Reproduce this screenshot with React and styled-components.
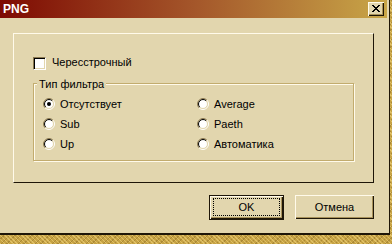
import React from "react";
import styled, { createGlobalStyle } from "styled-components";

const FACE = "#E2D6AE";
const LIGHT = "#FFFAEA";
const DARK = "#1E1608";
const SHADE = "#A8925A";

const GlobalStyle = createGlobalStyle`
  html, body { margin: 0; padding: 0; }
  body {
    font-family: "Liberation Sans", Arial, sans-serif;
    font-size: 11px;
    color: #000;
    background: #C8A442;
  }
`;

const Desktop = styled.div`
  width: 392px;
  height: 244px;
  overflow: hidden;
  background-color: #C6A244;
  background-image:
    repeating-linear-gradient(45deg, rgba(255, 228, 140, 0.45) 0 1px, transparent 1px 3px),
    repeating-linear-gradient(-45deg, rgba(110, 80, 20, 0.3) 0 1px, transparent 1px 4px);
`;

const Window = styled.div`
  box-sizing: border-box;
  width: 393px;
  height: 238px;
  margin: -3px 0 0 -3px;
  padding: 2px;
  background: ${FACE};
  border: 1px solid ${DARK};
  border-bottom-width: 2px;
  border-color: ${FACE} ${DARK} ${DARK} ${FACE};
  display: flex;
  flex-direction: column;
`;

const TitleBar = styled.div`
  height: 18px;
  flex: none;
  display: flex;
  align-items: center;
  justify-content: space-between;
  padding: 0 3px 0 3px;
  background: linear-gradient(to right, #7E0A02, #A4562A 50%, #C8A648);
`;

const Title = styled.span`
  color: #fff;
  font-weight: bold;
  font-size: 12px;
  line-height: 14px;
  letter-spacing: 0;
`;

const CloseButton = styled.div`
  box-sizing: border-box;
  width: 16px;
  height: 14px;
  background: ${FACE};
  box-shadow: inset 1px 1px 0 ${LIGHT}, inset -1px -1px 0 ${DARK}, inset -2px -2px 0 ${SHADE};
  display: flex;
  align-items: center;
  justify-content: center;
  padding: 0 1px 1px 0;
`;

const Body = styled.div`
  flex: 1;
  display: flex;
  flex-direction: column;
  padding: 15px 13px 0;
`;

const Panel = styled.div`
  box-sizing: border-box;
  height: 150px;
  border: 1px solid;
  border-color: ${LIGHT} ${DARK} ${DARK} ${LIGHT};
  padding: 23px 0 0 19px;
`;

const CheckRow = styled.label`
  display: flex;
  align-items: center;
  gap: 6px;
  height: 13px;
`;

const CheckBox = styled.span`
  box-sizing: border-box;
  width: 13px;
  height: 13px;
  background: #fff;
  border: 1px solid;
  border-color: #8A7850 #fff #fff #8A7850;
  box-shadow: inset 1px 1px 0 #000, inset -1px -1px 0 ${FACE};
`;

const Label = styled.span`
  line-height: 13px;
  white-space: nowrap;
  margin-top: ${(p) => (p.$lift ? "-2px" : "0")};
`;

const GroupBox = styled.div`
  position: relative;
  box-sizing: border-box;
  width: 321px;
  height: 78px;
  margin-top: 13px;
  border: 1px solid #C2AC6E;
  box-shadow: inset 1px 1px 0 ${LIGHT}, 1px 1px 0 ${LIGHT};
  padding: 10px 0 0 9px;
`;

const Legend = styled.span`
  position: absolute;
  top: -6px;
  left: 3px;
  padding: 0 2px;
  background: ${FACE};
  line-height: 13px;
  white-space: nowrap;
`;

const RadioGrid = styled.div`
  display: grid;
  grid-template-columns: 154px 1fr;
  grid-auto-rows: 20px;
  grid-auto-flow: column;
  grid-template-rows: repeat(3, 20px);
`;

const RadioItem = styled.label`
  display: flex;
  align-items: center;
  gap: 5px;
`;

const ButtonRow = styled.div`
  display: flex;
  justify-content: flex-end;
  align-items: flex-start;
  gap: 11px;
  margin-top: 12px;
`;

const Button = styled.div`
  box-sizing: border-box;
  width: ${(p) => p.$w}px;
  height: ${(p) => p.$h}px;
  background: ${FACE};
  display: flex;
  align-items: center;
  justify-content: center;
  line-height: 13px;
  border: ${(p) => (p.$default ? `1px solid ${DARK}` : "none")};
  box-shadow: inset 1px 1px 0 ${LIGHT}, inset -1px -1px 0 ${DARK}, inset -2px -2px 0 ${SHADE};
  position: relative;
`;

const Focus = styled.span`
  position: absolute;
  left: 3px;
  top: 2px;
  right: 3px;
  bottom: 3px;
  border: 1px dotted #000;
`;

function CloseGlyph() {
  const rows = [
    "XX....XX",
    ".XX..XX.",
    "..XXXX..",
    "...XX...",
    "..XXXX..",
    ".XX..XX.",
    "XX....XX",
  ];
  const rects = [];
  rows.forEach((r, y) =>
    r.split("").forEach((c, x) => {
      if (c === "X") rects.push(<rect key={`${x}-${y}`} x={x} y={y} width="1" height="1" />);
    })
  );
  return (
    <svg width="8" height="7" viewBox="0 0 8 7" shapeRendering="crispEdges" fill="#000">
      {rects}
    </svg>
  );
}

function Radio({ checked }) {
  const arc = (r) => {
    const d = r * 0.7071;
    return {
      tl: `M ${6 - d} ${6 + d} A ${r} ${r} 0 0 1 ${6 + d} ${6 - d}`,
      br: `M ${6 + d} ${6 - d} A ${r} ${r} 0 0 1 ${6 - d} ${6 + d}`,
    };
  };
  const o = arc(5.5);
  const i = arc(4.5);
  return (
    <svg width="12" height="12" viewBox="0 0 12 12">
      <circle cx="6" cy="6" r="4.5" fill="#fff" />
      <path d={o.tl} stroke="#8A7850" strokeWidth="1" fill="none" />
      <path d={o.br} stroke="#fff" strokeWidth="1" fill="none" />
      <path d={i.tl} stroke="#000" strokeWidth="1" fill="none" />
      <path d={i.br} stroke={FACE} strokeWidth="1" fill="none" />
      {checked && <circle cx="6" cy="6" r="2" fill="#000" />}
    </svg>
  );
}

const options = [
  { label: "Отсутствует", checked: true },
  { label: "Sub" },
  { label: "Up" },
  { label: "Average" },
  { label: "Paeth" },
  { label: "Автоматика" },
];

export default function App() {
  return (
    <>
      <GlobalStyle />
      <Desktop>
        <Window>
          <TitleBar>
            <Title>PNG</Title>
            <CloseButton>
              <CloseGlyph />
            </CloseButton>
          </TitleBar>
          <Body>
            <Panel>
              <CheckRow>
                <CheckBox />
                <Label $lift>Чересстрочный</Label>
              </CheckRow>
              <GroupBox>
                <Legend>Тип фильтра</Legend>
                <RadioGrid>
                  {options.map((o) => (
                    <RadioItem key={o.label}>
                      <Radio checked={o.checked} />
                      <Label>{o.label}</Label>
                    </RadioItem>
                  ))}
                </RadioGrid>
              </GroupBox>
            </Panel>
            <ButtonRow>
              <Button $default $w={75} $h={25}>
                <Focus />
                OK
              </Button>
              <Button $w={79} $h={24}>
                Отмена
              </Button>
            </ButtonRow>
          </Body>
        </Window>
      </Desktop>
    </>
  );
}
